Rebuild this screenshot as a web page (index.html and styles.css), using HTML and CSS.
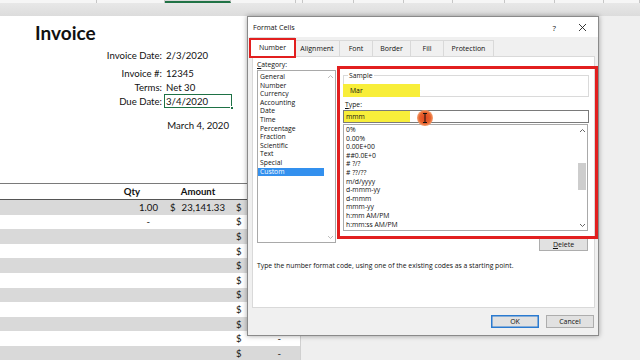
FILE: index.html
```html
<!DOCTYPE html>
<html>
<head>
<meta charset="utf-8">
<link rel="stylesheet" href="styles.css">
</head>
<body>
<div class="app">
  <div class="colbar">
    <div class="ch"></div><div class="ch"></div><div class="ch sel"></div><div class="ch"></div><div class="ch"></div><div class="ch"></div><div class="ch"></div><div class="ch"></div><div class="ch"></div><div class="ch"></div><div class="ch"></div><div class="ch"></div>
  </div>
  <div class="band"></div>
  <div class="main">
    <div class="sheet">
      <div class="row r-title"><div class="c title">Invoice</div></div>
      <div class="row"><div class="c"></div><div class="c lab">Invoice Date:</div><div class="c val">2/3/2020</div><div class="c"></div></div>
      <div class="gap4"></div>
      <div class="row"><div class="c"></div><div class="c lab">Invoice #:</div><div class="c val">12345</div><div class="c"></div></div>
      <div class="row"><div class="c"></div><div class="c lab">Terms:</div><div class="c val">Net 30</div><div class="c"></div></div>
      <div class="row"><div class="c"></div><div class="c lab">Due Date:</div><div class="c val active">3/4/2020</div><div class="c"></div></div>
      <div class="gap10"></div>
      <div class="row"><div class="c"></div><div class="c"></div><div class="c date">March 4, 2020</div><div class="c"></div></div>
      <div class="gap51"></div>
      <div class="row head"><div class="c"></div><div class="c ctr">Qty</div><div class="c ctr">Amount</div><div class="c"></div></div>
      <div class="row data g"><div class="c"></div><div class="c qty">1.00</div><div class="c acct"><span>$</span><span>23,141.33</span></div><div class="c acct"><span>$</span></div></div>
      <div class="row data"><div class="c"></div><div class="c qty dash">-</div><div class="c"></div><div class="c acct"><span>$</span></div></div>
      <div class="row data g"><div class="c"></div><div class="c"></div><div class="c"></div><div class="c acct"><span>$</span></div></div>
      <div class="row data"><div class="c"></div><div class="c"></div><div class="c"></div><div class="c acct"><span>$</span></div></div>
      <div class="row data g"><div class="c"></div><div class="c"></div><div class="c"></div><div class="c acct"><span>$</span></div></div>
      <div class="row data"><div class="c"></div><div class="c"></div><div class="c"></div><div class="c acct"><span>$</span></div></div>
      <div class="row data g"><div class="c"></div><div class="c"></div><div class="c"></div><div class="c acct"><span>$</span></div></div>
      <div class="row data"><div class="c"></div><div class="c"></div><div class="c"></div><div class="c acct"><span>$</span></div></div>
      <div class="row data g"><div class="c"></div><div class="c"></div><div class="c"></div><div class="c acct"><span>$</span></div></div>
      <div class="row data"><div class="c"></div><div class="c"></div><div class="c"></div><div class="c acct"><span>$</span><span class="d">-</span></div></div>
      <div class="row data g"><div class="c"></div><div class="c"></div><div class="c"></div><div class="c acct"><span>$</span><span class="d">-</span></div></div>
    </div>
    <div class="rest"></div>
  </div>

  <div class="dialog">
    <div class="titlebar">
      <span class="dtitle">Format Cells</span>
      <span class="help">?</span>
      <svg class="close" width="9" height="9" viewBox="0 0 9 9"><path d="M1 1L8 8M8 1L1 8" stroke="#222" stroke-width="0.9" fill="none"/></svg>
    </div>
    <div class="tabs">
      <div class="tab active t-number">Number</div>
      <div class="tab t-align">Alignment</div>
      <div class="tab t-font">Font</div>
      <div class="tab t-border">Border</div>
      <div class="tab t-fill">Fill</div>
      <div class="tab t-prot">Protection</div>
    </div>
    <div class="panel">
      <div class="panel-top">
        <div class="left">
          <div class="lbl"><u>C</u>ategory:</div>
          <div class="listbox cat">
            <div class="items">
              <div class="it">General</div>
              <div class="it">Number</div>
              <div class="it">Currency</div>
              <div class="it">Accounting</div>
              <div class="it">Date</div>
              <div class="it">Time</div>
              <div class="it">Percentage</div>
              <div class="it">Fraction</div>
              <div class="it">Scientific</div>
              <div class="it">Text</div>
              <div class="it">Special</div>
              <div class="it selitem">Custom</div>
            </div>
            <div class="vscroll faint">
              <svg width="7" height="5" viewBox="0 0 7 5"><path d="M1 4L3.5 1.5L6 4" stroke="#b8b8b8" stroke-width="0.9" fill="none"/></svg>
              <div class="track"></div>
              <svg width="7" height="5" viewBox="0 0 7 5"><path d="M1 1L3.5 3.5L6 1" stroke="#b8b8b8" stroke-width="0.9" fill="none"/></svg>
            </div>
          </div>
        </div>
        <div class="right">
          <div class="sample"><span class="slbl">Sample</span><div class="mar">Mar</div></div>
          <div class="lbl type"><u>T</u>ype:</div>
          <div class="input"><span class="mmm">mmm</span></div>
          <div class="listbox fmt">
            <div class="items">
              <div class="it">0%</div>
              <div class="it">0.00%</div>
              <div class="it">0.00E+00</div>
              <div class="it">##0.0E+0</div>
              <div class="it"># ?/?</div>
              <div class="it"># ??/??</div>
              <div class="it">m/d/yyyy</div>
              <div class="it">d-mmm-yy</div>
              <div class="it">d-mmm</div>
              <div class="it">mmm-yy</div>
              <div class="it">h:mm AM/PM</div>
              <div class="it">h:mm:ss AM/PM</div>
            </div>
            <div class="vscroll">
              <svg width="7" height="5" viewBox="0 0 7 5"><path d="M1 4L3.5 1.5L6 4" stroke="#555" stroke-width="0.9" fill="none"/></svg>
              <div class="track"><div class="thumb"></div></div>
              <svg width="7" height="5" viewBox="0 0 7 5"><path d="M1 1L3.5 3.5L6 1" stroke="#555" stroke-width="0.9" fill="none"/></svg>
            </div>
          </div>
          <div class="btn delete"><u>D</u>elete</div>
        </div>
      </div>
      <div class="desc">Type the number format code, using one of the existing codes as a starting point.</div>
    </div>
    <div class="footer">
      <div class="btn ok">OK</div>
      <div class="btn">Cancel</div>
    </div>
    <div class="redbox tabmark"></div>
    <div class="redbox mainmark"></div>
    <div class="cursor">
      <svg width="18" height="18" viewBox="0 0 18 18">
        <defs><radialGradient id="g" cx="50%" cy="50%" r="50%"><stop offset="0%" stop-color="#e0451f"/><stop offset="70%" stop-color="#e8632d"/><stop offset="100%" stop-color="#f3a070"/></radialGradient></defs>
        <circle cx="9" cy="9" r="8" fill="url(#g)"/>
        <path d="M7 4.5H11M9 4.5V13.5M7 13.5H11" stroke="#111" stroke-width="1" fill="none"/>
      </svg>
    </div>
  </div>
</div>
</body>
</html>
```
FILE: styles.css
```css
html, body { margin: 0; padding: 0; }
body { width: 640px; height: 360px; overflow: hidden; font-family: Lato, "Liberation Sans", sans-serif; color: #111; }
.app { position: relative; width: 640px; height: 360px; background: #efefef; overflow: hidden; }

.colbar { height: 3px; display: grid; grid-template-columns: 97px 68px 66px 65px 7px 51px 50px 49px 52px 50px 49px 1fr; background: #f6f6f6; }
.ch { border-right: 1px solid #c6c6c6; box-sizing: border-box; }
.ch.sel { background: #d8d8d8; border-bottom: 2px solid #217346; }
.band { height: 13px; background: linear-gradient(#e8e8e8, #dcdcdc); }

.main { display: flex; height: 344px; }
.sheet { width: 300px; background: #fff; font-size: 9.6px; }
.rest { flex: 1; background: #efefef; border-left: 1px solid #d0d0d0; }

.row { display: grid; grid-template-columns: 100px 64px 68px 68px; height: 14px; align-items: center; }
.c { white-space: nowrap; overflow: visible; height: 100%; display: flex; align-items: center; box-sizing: border-box; }
.r-title { height: 32px; grid-template-columns: 1fr; }
.title { font-size: 19px; font-weight: 700; padding-left: 35px; }
.lab { justify-content: flex-end; padding-right: 2px; }
.val { padding-left: 2px; }
.val.active { position: relative; outline: 1.5px solid #1e7145; outline-offset: -1px; }
.val.active::after { content: ""; position: absolute; right: -2px; bottom: -2px; width: 4px; height: 4px; background: #1e7145; border: 1px solid #fff; box-sizing: border-box; }
.date { justify-content: flex-end; padding-right: 3px; }
.gap4 { height: 4px; }
.gap10 { height: 10px; }
.gap51 { height: 51px; }
.head { height: 17px; border-top: 1px solid #7a7a7a; border-bottom: 1px solid #555; box-sizing: border-box; font-weight: 700; }
.ctr { justify-content: center; }
.data { height: 14.6px; }
.data.g { background: #d9d9d9; }
.qty { justify-content: flex-end; padding-right: 6px; }
.qty.dash { padding-right: 14px; }
.acct { justify-content: space-between; padding-left: 6px; padding-right: 7px; }
.acct .d { padding-right: 12px; }
.data .c:nth-child(4) { padding-left: 4px; }

/* dialog */
.dialog { position: absolute; left: 247px; top: 16px; width: 352px; height: 320px; box-sizing: border-box; border: 1px solid #8a8a8a; background: #f0f0f0; box-shadow: 0 0 5px rgba(0,0,0,0.35); display: flex; flex-direction: column; font-family: "Open Sans", "Noto Sans", sans-serif; font-size: 6.8px; color: #111; }
.titlebar { height: 20px; background: #fff; display: flex; align-items: center; padding-left: 5px; }
.dtitle { flex: 1; font-size: 7.2px; }
.help { font-size: 8px; margin-right: 22px; }
.close { margin-right: 11px; }
.tabs { height: 19px; display: flex; align-items: flex-end; padding-left: 2px; position: relative; z-index: 2; }
.tab { height: 16px; box-sizing: border-box; border: 1px solid #d9d9d9; border-bottom: none; background: #f0f0f0; display: flex; align-items: center; justify-content: center; font-size: 7px; margin-right: -1px; }
.tab.active { background: #fff; margin-bottom: -1px; height: 20px; }
.t-number { width: 45px; }
.t-align { width: 46px; }
.t-font { width: 34px; }
.t-border { width: 39px; }
.t-fill { width: 34px; }
.t-prot { width: 51px; }

.panel { height: 252px; box-sizing: border-box; margin: 0 3px 0 4px; background: #fff; border: 1px solid #d9d9d9; padding: 3px 0 0 4px; position: relative; z-index: 1; }
.panel-top { display: flex; gap: 7px; height: 191px; }
.left { width: 79px; }
.lbl { line-height: 10px; height: 10px; }
.listbox { box-sizing: border-box; border: 1px solid #a9a9a9; display: flex; background: #fff; }
.listbox.cat { height: 173px; }
.items { flex: 1; padding-top: 2px; }
.it { line-height: 8.6px; height: 8.6px; padding-left: 2px; white-space: nowrap; }
.selitem { background: #3390ee; color: #fff; margin-right: 1px; }
.vscroll { width: 10px; display: flex; flex-direction: column; align-items: center; padding: 3px 0 2px; box-sizing: border-box; }
.vscroll .track { flex: 1; width: 100%; display: flex; justify-content: center; }
.vscroll.faint { background: #fff; }
.thumb { width: 8px; height: 27px; background: #cdcdcd; margin-top: 30px; }

.right { width: 246px; }
.sample { margin-top: 15px; height: 22px; box-sizing: border-box; border: 1px solid #dadada; display: flex; flex-direction: column; align-items: flex-start; }
.slbl { margin-left: 4px; margin-top: -5px; line-height: 9px; height: 9px; background: #fff; padding: 0 1px; }
.mar { margin-top: 4px; margin-left: -1px; width: 77px; height: 13px; flex: none; background: #f8ee3a; line-height: 13px; padding-left: 7px; box-sizing: border-box; }
.lbl.type { margin-top: 3px; line-height: 9px; height: 9px; padding-left: 2px; }
.input { margin-top: 1px; height: 13px; box-sizing: border-box; border: 1px solid #7a7a7a; padding: 0; display: flex; align-items: stretch; }
.mmm { width: 66px; background: #f8ee3a; padding-left: 2px; line-height: 11px; box-sizing: border-box; }
.listbox.fmt { margin-top: 1px; height: 107px; width: 245px; }
.listbox.fmt .items { padding-top: 1px; }
.btn { height: 13px; box-sizing: border-box; border: 1px solid #adadad; background: #e1e1e1; display: flex; align-items: center; justify-content: center; font-size: 7px; }
.delete { width: 49px; margin-top: 7px; margin-left: 196px; }
.desc { margin-top: 10px; line-height: 9px; white-space: nowrap; }
.footer { flex: 1; display: flex; justify-content: flex-end; gap: 7px; padding: 7px 4px 0 0; }
.footer .btn { width: 48px; }
.btn.ok { border: 1px solid #2a7ad0; box-shadow: inset 0 0 0 0.5px #2a7ad0; }

.redbox { position: absolute; border: 2.5px solid #e21f1f; box-sizing: border-box; z-index: 5; }
.tabmark { left: 1px; top: 21px; width: 47px; height: 20px; }
.mainmark { left: 89px; top: 49px; width: 261px; height: 173px; border-width: 3px; }
.cursor { position: absolute; left: 168px; top: 92px; z-index: 6; width: 18px; height: 18px; }
```
